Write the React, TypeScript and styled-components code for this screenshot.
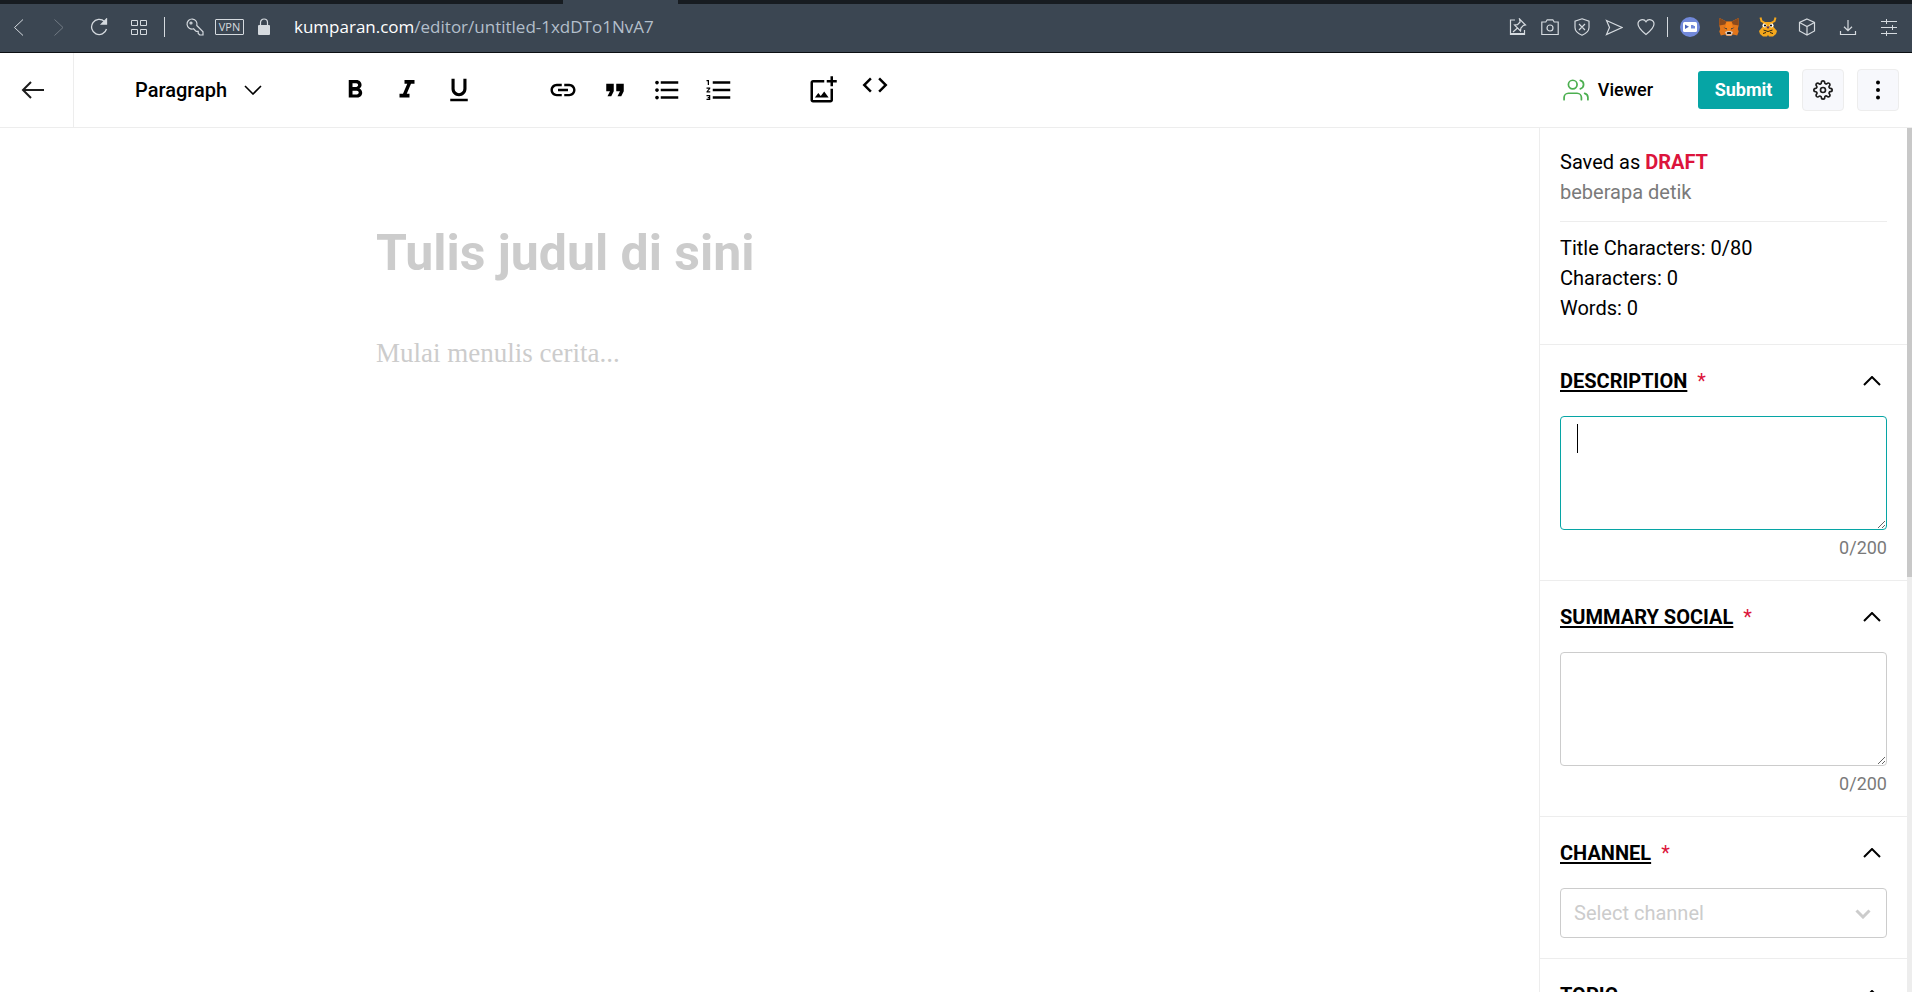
import React from "react";
import styled, { createGlobalStyle } from "styled-components";
import {
  MdFormatBold,
  MdFormatItalic,
  MdFormatUnderlined,
  MdLink,
  MdFormatQuote,
  MdFormatListBulleted,
  MdFormatListNumbered,
  MdOutlineAddPhotoAlternate,
  MdCode,
} from "react-icons/md";
import { FiSettings, FiUsers } from "react-icons/fi";

const GlobalStyle = createGlobalStyle`
  *, *::before, *::after { box-sizing: border-box; }
  body {
    margin: 0;
    font-family: Roboto, "Liberation Sans", sans-serif;
    font-size: 20px;
    line-height: 30px;
    color: #000;
    background: #fff;
  }
  button, select, textarea { font: inherit; color: inherit; }
  svg { display: block; flex: none; }
`;

const Page = styled.div`
  display: flex;
  flex-direction: column;
  height: 100vh;
  overflow: hidden;
`;

/* Browser chrome */

const TabStrip = styled.div`
  display: flex;
  flex: none;
  height: 4px;
  padding-left: 563px;
  background: #171c21;
`;

const ActiveTab = styled.div`
  width: 115px;
  background: #3b4652;
`;

const BrowserBar = styled.div`
  display: flex;
  flex: none;
  align-items: center;
  justify-content: space-between;
  height: 49px;
  padding: 0 13px 2px 9px;
  background: #3b4652;
  border-bottom: 1px solid #0c0f12;
  color: #d5dadf;
`;

const BarGroup = styled.div<{ $gap?: number }>`
  display: flex;
  align-items: center;
  gap: ${(p) => p.$gap ?? 0}px;
`;

const BarButton = styled.button<{ $dim?: boolean }>`
  display: flex;
  align-items: center;
  justify-content: center;
  width: 20px;
  height: 20px;
  padding: 0;
  border: 0;
  background: none;
  opacity: ${(p) => (p.$dim ? 0.35 : 1)};
`;

const BarDivider = styled.span<{ $before: number; $after: number }>`
  width: 1px;
  height: 20px;
  margin: 0 ${(p) => p.$after}px 0 ${(p) => p.$before}px;
  background: #d5dadf;
`;

const VpnBadge = styled.button`
  width: 29px;
  height: 16px;
  padding: 0;
  border: 1px solid #d5dadf;
  border-radius: 1px;
  background: none;
  font-family: "Open Sans", sans-serif;
  font-size: 11px;
  line-height: 14px;
`;

const Url = styled.a`
  margin-left: 20px;
  color: #b3bfcb;
  font-family: "Segoe UI", "Open Sans", sans-serif;
  font-size: 17px;
  line-height: 24px;
  text-decoration: none;

  strong {
    color: #fff;
    font-weight: 400;
  }
`;

/* Editor header */

const Header = styled.header`
  display: flex;
  flex: none;
  height: 75px;
  border-bottom: 1px solid #ededed;
`;

const BackButton = styled.button`
  display: flex;
  align-items: center;
  width: 74px;
  padding: 0 0 0 21px;
  border: 0;
  border-right: 1px solid #ededed;
  background: none;
`;

const Toolbar = styled.div`
  display: flex;
  flex: 1;
  align-items: center;
  padding-left: 61px;
`;

const BlockType = styled.button`
  display: flex;
  align-items: center;
  gap: 17px;
  width: 205px;
  padding: 0;
  border: 0;
  background: none;
  font-weight: 500;
`;

const ToolGroup = styled.div`
  display: flex;
  align-items: flex-start;
  gap: 22px;
  margin-right: 74px;
`;

const ToolButton = styled.button<{ $tall?: boolean }>`
  display: flex;
  align-items: center;
  justify-content: center;
  width: 30px;
  height: ${(p) => (p.$tall ? 40 : 30)}px;
  padding: 0;
  border: 0;
  background: none;
  font-size: 30px;
`;

const Actions = styled.div`
  display: flex;
  align-items: center;
  padding-right: 13px;
`;

const ViewerButton = styled.button`
  display: flex;
  align-items: center;
  gap: 9px;
  margin-right: 45px;
  padding: 0;
  border: 0;
  background: none;
  font-size: 18px;
  font-weight: 500;

  svg {
    color: #4caf50;
    font-size: 26px;
    stroke-width: 1.6;
  }
`;

const SubmitButton = styled.button`
  width: 91px;
  height: 38px;
  margin-right: 13px;
  padding: 0;
  border: 0;
  border-radius: 3px;
  background: #06a5a5;
  color: #fff;
  font-size: 18px;
  font-weight: 700;
`;

const SquareButton = styled.button`
  display: flex;
  align-items: center;
  justify-content: center;
  width: 42px;
  height: 42px;
  padding: 0;
  border: 1px solid #ededed;
  border-radius: 4px;
  background: #f7f8fc;
  color: #1c1c1c;
  font-size: 20px;

  & + & {
    margin-left: 13px;
  }
`;

/* Body */

const Body = styled.div`
  display: flex;
  flex: 1;
  min-height: 0;
`;

const Canvas = styled.main`
  flex: 1;
  padding: 88px 24px;
`;

const Story = styled.article`
  max-width: 787px;
  margin: 0 auto;
  color: #ccc;
`;

const StoryTitle = styled.h1`
  margin: 0;
  font-size: 50px;
  font-weight: 700;
  line-height: 74px;
`;

const StoryText = styled.p`
  margin: 43px 0 0;
  font-family: Georgia, "Liberation Serif", serif;
  font-size: 27px;
  line-height: 40px;
`;

const Sidebar = styled.aside`
  flex: none;
  width: 368px;
  border-left: 1px solid #ededed;
  overflow: hidden;
`;

const ScrollTrack = styled.div`
  flex: none;
  width: 5px;
  background: #ededed;
`;

const ScrollThumb = styled.div`
  height: 52%;
  background: #c8c8c8;
`;

const Stats = styled.section`
  padding: 19px 20px 21px;
  border-bottom: 1px solid #ededed;
`;

const StatLine = styled.p<{ $muted?: boolean }>`
  margin: 0;
  color: ${(p) => (p.$muted ? "#7a7a7a" : "#000")};
`;

const DraftMark = styled.strong`
  color: #dc143c;
  font-weight: 700;
`;

const Rule = styled.hr`
  height: 1px;
  margin: 14px 0 11px;
  border: 0;
  background: #ededed;
`;

const Panel = styled.section`
  padding: 21px 20px 20px;
  border-bottom: 1px solid #ededed;
`;

const PanelHead = styled.div`
  display: flex;
  align-items: center;
  justify-content: space-between;
  height: 30px;
  margin-bottom: 20px;
`;

const PanelLabel = styled.label`
  font-weight: 700;
  text-decoration: underline;
  text-decoration-thickness: 2px;
  text-decoration-skip-ink: none;
  text-underline-offset: 2px;
`;

const Required = styled.span`
  margin-left: 10px;
  color: #dc143c;
`;

const CollapseButton = styled.button`
  display: flex;
  align-items: center;
  justify-content: center;
  width: 30px;
  height: 30px;
  padding: 0;
  border: 0;
  background: none;
`;

const Field = styled.div`
  position: relative;
`;

const TextArea = styled.textarea<{ $active?: boolean }>`
  display: block;
  width: 100%;
  height: 114px;
  padding: 6px 16px;
  border: 1px solid ${(p) => (p.$active ? "#06a5a5" : "#ccc")};
  border-radius: 4px;
  outline: 0;
  background: #fff;
  caret-color: transparent;
  resize: vertical;
`;

const Caret = styled.span`
  position: absolute;
  top: 8px;
  left: 17px;
  width: 1px;
  height: 29px;
  background: #000;
`;

const Counter = styled.p`
  margin: 6px 0 0;
  color: #7a7a7a;
  font-size: 18px;
  line-height: 24px;
  text-align: right;
`;

const Select = styled.select`
  display: block;
  width: 100%;
  height: 50px;
  padding: 0 13px;
  border: 1px solid #ccc;
  border-radius: 4px;
  outline: 0;
  background: #fff;
  color: #ccc;
  appearance: none;
`;

const SelectArrow = styled.span`
  position: absolute;
  top: 21px;
  right: 16px;
  color: #ccc;
  pointer-events: none;
`;

type LineProps = { children: React.ReactNode; w?: number };

const Line = ({ children, w = 1 }: LineProps) => (
  <svg width="18" height="18" viewBox="0 0 18 18" fill="none" stroke="currentColor" strokeWidth={w} aria-hidden="true">
    {children}
  </svg>
);

const Chevron = ({ up }: { up?: boolean }) => (
  <svg width="18" height="10" viewBox="0 0 18 10" fill="none" stroke="currentColor" strokeWidth={up ? 2 : 1.6} aria-hidden="true">
    <path d={up ? "M1 9l8-8 8 8" : "M1 1l8 8 8-8"} />
  </svg>
);

const DiscordIcon = () => (
  <svg width="20" height="20" viewBox="0 0 20 20" aria-hidden="true">
    <circle cx="10" cy="10" r="10" fill="#7289da" />
    <rect x="3" y="5" width="14" height="10" rx="1.5" fill="#fff" />
    <path d="M5 7.5l4 2.3-4 2.3z" fill="#4a62b8" />
    <path d="M11 8h2.500v1H15v2.500h-4z" fill="#7289da" />
  </svg>
);

const FoxIcon = () => (
  <svg width="20" height="20" viewBox="0 0 20 20" aria-hidden="true">
    <path d="M.5 1l7 3.500h5L19.500 1l.3 7-1 4 .9 2.500-1.500 4-4.200-1-2 1.500H8l-2-1.500-4.200 1-1.500-4L1.200 12l-1-4z" fill="#e2761b" />
    <path d="M.5 1l7 3.800-1.500 2.700L.2 8.500zM19.500 1l-7 3.800L14 7.500l5.800 1z" fill="#8a4a1d" />
    <path d="M7.500 4.800h5l1.500 7.500-4 3-4-3z" fill="#f6851b" />
    <path d="M4.500 10.500l3.300.8.4 1.400zM15.500 10.500l-3.300.8-.4 1.400z" fill="#233447" />
    <path d="M6 15l2.500-1h3l2.500 1-1.500 3.500h-5z" fill="#d9c8bd" />
    <path d="M8.300 15h3.400l.5 2H7.800z" fill="#161616" />
  </svg>
);

const HornedIcon = () => (
  <svg width="20" height="20" viewBox="0 0 20 20" aria-hidden="true">
    <path d="M2.500.5L3.500 4 7 6M17.500.5l-1 3.500L13 6" fill="none" stroke="#f5a81c" strokeWidth="2" />
    <path d="M5 6l2-1h6l2 1 .5 4L19 14l-1 3-3 2.500h-4L10 18l-1 1.500H5L2 17l-1-3 3.500-4z" fill="#f5a81c" />
    <circle cx="6.500" cy="8.500" r="2" fill="#fff" />
    <circle cx="13.500" cy="8.500" r="2" fill="#fff" />
    <circle cx="7" cy="8.500" r="1.100" fill="#111" />
    <circle cx="13" cy="8.500" r="1.100" fill="#111" />
    <path d="M8.300 9.500h3.400L10 12z" fill="#4b2b6b" />
    <path d="M5.500 13l4.500 1.500 4.500-1.500M5 16.500l3-1M15 16.500l-3-1" fill="none" stroke="#111" strokeWidth=".9" />
  </svg>
);

const pageActions = [
  {
    label: "Add to pinboard",
    art: <path d="M6 2H1.500v14.500h14V12M1.500 15.500h14M10.500 1l6 6-2 .4-2.600 2.600-.4 3-6-6 3-.4 2.600-2.600zM8.500 10L4 14" />,
  },
  {
    label: "Snapshot",
    art: (
      <>
        <path d="M.8 4h4l1.400-2.200h5.600L13.200 4h4v12.500H.8z" />
        <circle cx="9" cy="10" r="3" />
      </>
    ),
  },
  {
    label: "Ad blocker",
    art: <path d="M9 .8l7 2.400v6.300c0 3.500-3 6-7 7.700-4-1.700-7-4.200-7-7.700V3.200zM6 6l6 6M12 6l-6 6" />,
  },
  { label: "Send to my flow", art: <path d="M1.500 2.500L17 9.500 1.500 16.500l3-7z" /> },
  {
    label: "Bookmark",
    art: <path d="M9 16.500C4 12.500 1 9.500 1 6a4.300 4.300 0 0 1 8-2.200A4.300 4.300 0 0 1 17 6c0 3.500-3 6.500-8 10.500z" />,
  },
];

const formatTools = [
  { label: "Bold", Icon: MdFormatBold },
  { label: "Italic", Icon: MdFormatItalic },
  { label: "Underline", Icon: MdFormatUnderlined },
];

const blockTools = [
  { label: "Link", Icon: MdLink },
  { label: "Quote", Icon: MdFormatQuote },
  { label: "Bulleted list", Icon: MdFormatListBulleted },
  { label: "Numbered list", Icon: MdFormatListNumbered },
];

const Head = ({ id, title, required }: { id: string; title: string; required?: boolean }) => (
  <PanelHead>
    <span>
      <PanelLabel htmlFor={id}>{title}</PanelLabel>
      {required && <Required>*</Required>}
    </span>
    <CollapseButton type="button" aria-label={`Collapse ${title.toLowerCase()}`}>
      <Chevron up />
    </CollapseButton>
  </PanelHead>
);

export default function App() {
  return (
    <Page>
      <GlobalStyle />
      <TabStrip>
        <ActiveTab />
      </TabStrip>
      <BrowserBar>
        <BarGroup>
          <BarGroup $gap={20}>
            <BarButton aria-label="Back">
              <Line><path d="M13 1.500L4.500 9.500l8.500 8" /></Line>
            </BarButton>
            <BarButton aria-label="Forward" $dim>
              <Line><path d="M4.500 1.500l8.500 8-8.500 8" /></Line>
            </BarButton>
            <BarButton aria-label="Reload">
              <Line w={1.3}>
                <path d="M14.500 3.500A7.600 7.600 0 1 0 16.500 11" />
                <path d="M16.500 1v5h-5z" fill="currentColor" />
              </Line>
            </BarButton>
            <BarButton aria-label="Speed dial">
              <Line><path d="M1.500 2.500h6v5h-6zM10.500 2.500h6v5h-6zM1.500 11.500h6v5h-6zM10.500 11.500h6v5h-6z" /></Line>
            </BarButton>
          </BarGroup>
          <BarDivider $before={15} $after={20} />
          <BarGroup $gap={10}>
            <BarButton aria-label="Passwords">
              <Line w={1.2}>
                <path d="M7.500 10.800A5 5 0 1 1 10.800 7.500l6.200 6.300V17h-3.200l-1.600-1.600v-2h-2z" />
                <circle cx="5" cy="5" r="1" />
              </Line>
            </BarButton>
            <VpnBadge>VPN</VpnBadge>
            <BarButton aria-label="Site information">
              <svg width="14" height="18" viewBox="0 0 14 18" aria-hidden="true">
                <path d="M3.500 8V4.500a3.500 3.500 0 0 1 7 0V8" fill="none" stroke="currentColor" strokeWidth="1.200" />
                <rect x="1" y="7" width="12" height="10" rx="1" fill="currentColor" />
              </svg>
            </BarButton>
          </BarGroup>
          <Url href="#"><strong>kumparan.com</strong>/editor/untitled-1xdDTo1NvA7</Url>
        </BarGroup>
        <BarGroup>
          <BarGroup $gap={12}>
            {pageActions.map(({ label, art }) => (
              <BarButton key={label} aria-label={label}><Line w={1.2}>{art}</Line></BarButton>
            ))}
          </BarGroup>
          <BarDivider $before={11} $after={12} />
          <BarGroup $gap={21}>
            <BarGroup $gap={19}>
              <BarButton aria-label="Discord extension"><DiscordIcon /></BarButton>
              <BarButton aria-label="Fox wallet extension"><FoxIcon /></BarButton>
              <BarButton aria-label="Honey extension"><HornedIcon /></BarButton>
              <BarButton aria-label="Extensions">
                <Line w={1.2}><path d="M9 1l7.500 3.500v8.500L9 17l-7.500-4V4.500zM1.500 4.500L9 8.500l7.500-4M9 8.500V17" /></Line>
              </BarButton>
            </BarGroup>
            <BarButton aria-label="Downloads">
              <Line w={1.2}><path d="M9 2v10.500M5 8.800l4 3.900 4-3.900M1.500 13v3.500h15V13" /></Line>
            </BarButton>
            <BarButton aria-label="Easy setup">
              <Line><path d="M1 3.500h16M1 9.500h16M1 15.500h16M6.500 1v5M12.500 7v5M6.500 13v5" /></Line>
            </BarButton>
          </BarGroup>
        </BarGroup>
      </BrowserBar>

      <Header>
        <BackButton type="button" aria-label="Back to stories">
          <svg width="24" height="18" viewBox="0 0 24 18" fill="none" stroke="#1c1c1c" strokeWidth="2" aria-hidden="true">
            <path d="M10 1L2 9l8 8M2 9h21" />
          </svg>
        </BackButton>
        <Toolbar>
          <BlockType type="button">
            Paragraph
            <Chevron />
          </BlockType>
          <ToolGroup>
            {formatTools.map(({ label, Icon }) => (
              <ToolButton key={label} type="button" aria-label={label}><Icon /></ToolButton>
            ))}
          </ToolGroup>
          <ToolGroup>
            {blockTools.map(({ label, Icon }) => (
              <ToolButton key={label} type="button" aria-label={label}><Icon /></ToolButton>
            ))}
          </ToolGroup>
          <ToolGroup>
            <ToolButton type="button" aria-label="Add image" $tall><MdOutlineAddPhotoAlternate /></ToolButton>
            <ToolButton type="button" aria-label="Embed code"><MdCode /></ToolButton>
          </ToolGroup>
        </Toolbar>
        <Actions>
          <ViewerButton type="button">
            <FiUsers />
            Viewer
          </ViewerButton>
          <SubmitButton type="submit">Submit</SubmitButton>
          <SquareButton type="button" aria-label="Settings"><FiSettings /></SquareButton>
          <SquareButton type="button" aria-label="More">
            <svg width="4" height="20" viewBox="0 0 4 20" fill="#000" aria-hidden="true">
              <circle cx="2" cy="2.500" r="2" />
              <circle cx="2" cy="10" r="2" />
              <circle cx="2" cy="17.500" r="2" />
            </svg>
          </SquareButton>
        </Actions>
      </Header>

      <Body>
        <Canvas>
          <Story>
            <StoryTitle>Tulis judul di sini</StoryTitle>
            <StoryText>Mulai menulis cerita...</StoryText>
          </Story>
        </Canvas>
        <Sidebar>
          <Stats>
            <StatLine>Saved as <DraftMark>DRAFT</DraftMark></StatLine>
            <StatLine $muted>beberapa detik</StatLine>
            <Rule />
            <StatLine>Title Characters: 0/80</StatLine>
            <StatLine>Characters: 0</StatLine>
            <StatLine>Words: 0</StatLine>
          </Stats>
          <Panel>
            <Head id="description" title="DESCRIPTION" required />
            <Field>
              <TextArea id="description" $active />
              <Caret />
            </Field>
            <Counter>0/200</Counter>
          </Panel>
          <Panel>
            <Head id="summary" title="SUMMARY SOCIAL" required />
            <TextArea id="summary" />
            <Counter>0/200</Counter>
          </Panel>
          <Panel>
            <Head id="channel" title="CHANNEL" required />
            <Field>
              <Select id="channel"><option>Select channel</option></Select>
              <SelectArrow>
                <svg width="16" height="10" viewBox="0 0 16 10" fill="none" stroke="currentColor" strokeWidth="3" aria-hidden="true">
                  <path d="M1.500 1.500L8 8l6.500-6.500" />
                </svg>
              </SelectArrow>
            </Field>
          </Panel>
          <Panel>
            <Head id="topic" title="TOPIC" />
            <TextArea id="topic" />
          </Panel>
        </Sidebar>
        <ScrollTrack><ScrollThumb /></ScrollTrack>
      </Body>
    </Page>
  );
}
